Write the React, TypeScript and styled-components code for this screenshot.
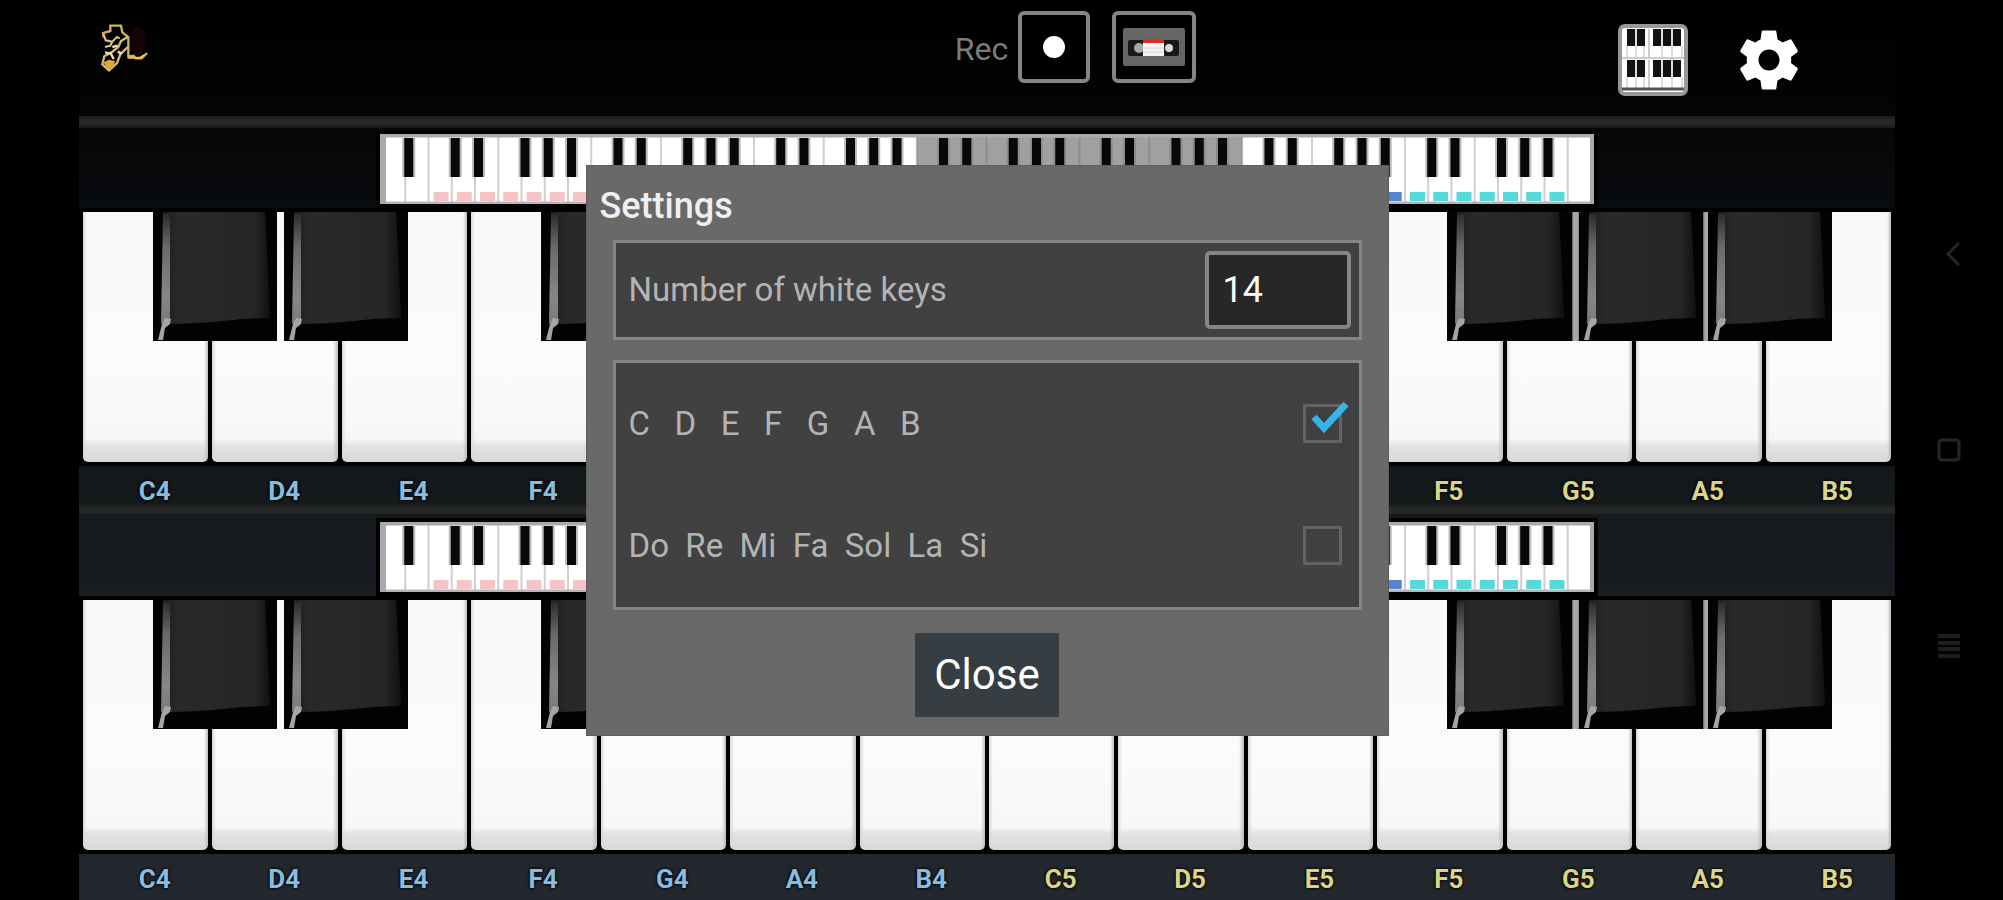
import React, { useState } from "react";
import styled, { createGlobalStyle } from "styled-components";

const GlobalStyle = createGlobalStyle`
  *, *::before, *::after { box-sizing: border-box; }
  body { margin: 0; background: #000; font-family: Roboto, "Liberation Sans", sans-serif; }
  button, input { font: inherit; color: inherit; }
  button { padding: 0; border: 0; background: none; cursor: pointer; }
  svg { display: block; }
`;

const Shell = styled.div`
  display: flex;
  min-height: 100vh;
  padding-left: 79px;
  background: #000;
`;

const Stage = styled.main`
  position: relative;
  flex: 1;
  min-width: 0;
  background: linear-gradient(#000 0, #020303 90px, #07090b 160px, #14191c 490px, #171b20 550px, #23282f 900px);
`;

const SystemBar = styled.nav`
  width: 108px;
  display: flex;
  flex-direction: column;
  align-items: center;
  justify-content: center;
  gap: 172px;
`;

const SystemButton = styled.button`
  width: 24px;
  height: 24px;
`;

const Header = styled.header`
  display: grid;
  grid-template-columns: 7fr auto 5fr;
  align-items: start;
  height: 116px;
  padding: 11px 89px 0 22px;
`;

const LogoWrap = styled.div`
  padding-top: 12px;
`;

const RecGroup = styled.div`
  display: flex;
  align-items: center;
  gap: 22px;
`;

const RecLabel = styled.label`
  display: flex;
  align-items: center;
  gap: 10px;
  font-size: 32px;
  line-height: 38px;
  color: #7c7c7c;
`;

const RecText = styled.span`
  padding-top: 4px;
`;

const FrameButton = styled.button<{ $wide?: boolean }>`
  display: grid;
  place-items: center;
  width: ${(p) => (p.$wide ? 84 : 72)}px;
  height: 72px;
  border: 4px solid #858585;
  border-radius: 6px;
  background: #000;
`;

const Tools = styled.div`
  display: flex;
  justify-content: flex-end;
  align-items: center;
  gap: 44px;
  padding-top: 12px;
`;

const Divider = styled.hr`
  height: 12px;
  margin: 0;
  border: 0;
  background: linear-gradient(#161818, #272828 30%, #272828 70%, #141616);
`;

const Section = styled.section`
  padding-top: 6px;
`;

const MiniStrip = styled.div`
  height: 74px;
  padding: 0 301px;

  svg {
    width: 100%;
    height: 70px;
    outline: 4px solid #020203;
  }
`;

const Keyboard = styled.div`
  display: flex;
  padding: 4px 0 4px 4px;
  background: #000;
`;

const Octave = styled.div`
  position: relative;
  flex: 1;
  display: flex;
`;

const WhiteKey = styled.button`
  flex: 1;
  height: 250px;
  margin-right: 4px;
  border-radius: 0 0 5px 5px;
  background:
    linear-gradient(90deg, #d8d8d8 0, transparent 4px, transparent 121px, #bdbdbd 100%),
    linear-gradient(#f8f8f8 0, #fbfbfb 60%, #f7f7f9 227px, #e2e2e2 234px, #d8d8d8 100%);
`;

const BlackKey = styled.button<{ $left: number; $shade?: boolean }>`
  position: absolute;
  top: 0;
  left: ${(p) => p.$left}%;
  width: 13.7%;
  height: 129px;
  background: #030303;

  &::after {
    content: "";
    display: ${(p) => (p.$shade ? "block" : "none")};
    position: absolute;
    top: 0;
    left: 100%;
    width: 8px;
    height: 100%;
    background: linear-gradient(90deg, #5a5a5a, #adadad 25%, #a3a3a3 75%, #4a4a4a);
  }

  svg { width: 100%; height: 100%; }
`;

const Labels = styled.div`
  display: flex;
  padding: 12px 0 0 4px;
`;

const NoteLabel = styled.span<{ $high: boolean }>`
  flex: 1;
  padding-left: 14px;
  text-align: center;
  font-size: 26px;
  font-weight: 700;
  line-height: 26px;
  color: ${(p) => (p.$high ? "#dcd586" : "#86bde0")};
  text-shadow: 0 0 3px #000, 0 0 3px #000;
`;

const Overlay = styled.div`
  position: absolute;
  inset: 0;
  display: flex;
  align-items: center;
  justify-content: center;
`;

const Dialog = styled.form`
  width: 803px;
  max-width: 100%;
  padding: 18px 26px;
  background: #696969;
  border: 1px solid #5e5e5e;
`;

const Title = styled.h1`
  margin: 0 0 12px -13px;
  font-size: 36px;
  font-weight: 500;
  line-height: 44px;
  color: #efefef;
`;

const Panel = styled.div`
  margin-bottom: 20px;
  padding: 0 15px 0 13px;
  border: 3px solid #868686;
  background: #414141;
`;

const Field = styled.div<{ $tall?: boolean }>`
  display: flex;
  align-items: center;
  justify-content: space-between;
  height: ${(p) => (p.$tall ? 122 : 94)}px;
  font-size: 33px;
  color: #b4b4b4;
`;

const FieldLabel = styled.label`
  white-space: pre;
`;

const NumberInput = styled.input`
  width: 146px;
  height: 78px;
  margin-right: -7px;
  padding: 0 14px;
  border: 4px solid #858585;
  border-radius: 5px;
  background: #272727;
  color: #fff;
  font-size: 36px;
  outline: 0;
`;

const CheckWrap = styled.span`
  position: relative;
  width: 39px;
  height: 39px;
  margin-right: 2px;
`;

const CheckInput = styled.input`
  appearance: none;
  display: block;
  width: 39px;
  height: 39px;
  margin: 0;
  border: 3px solid #636363;
  background: #404040;
`;

const CheckMark = styled.svg`
  position: absolute;
  left: 8px;
  top: -4px;
  pointer-events: none;
`;

const CloseButton = styled.button`
  display: block;
  width: 144px;
  height: 84px;
  margin: 23px auto 0;
  background: #363d43;
  color: #fff;
  font-size: 42px;
`;

const NOTES = ["C", "D", "E", "F", "G", "A", "B"];

const BLACK_KEYS = [
  { note: "C#", left: 7.75 },
  { note: "D#", left: 22.15 },
  { note: "F#", left: 50.6, shade: true },
  { note: "G#", left: 65.1, shade: true },
  { note: "A#", left: 79.4 },
];

const MINI_COUNT = 52;
const MINI_WIDTH = 1214;
const miniX = (i: number) => 2 + i * 23.25;

/* Colour of the octave marker below a key of the overview, C1 being key 2. */
function markerColor(i: number) {
  if (i < 2 || i > 50) return null;
  const colors = ["#f6c3c6", "#f0c890", "#e8e08c", "#9fd89a", "#86bde0", "#5585d2", "#55d9da"];
  return colors[Math.floor((i - 2) / 7)];
}

function MiniKeyboard() {
  const keys = Array.from({ length: MINI_COUNT }, (_, i) => i);
  return (
    <svg viewBox={`0 0 ${MINI_WIDTH} 70`} preserveAspectRatio="none" role="img" aria-label="Keyboard overview">
      <rect width={MINI_WIDTH} height="70" fill="#fff" />
      {keys.map((i) => {
        const color = markerColor(i);
        return (
          <g key={i}>
            {i > 0 && <rect x={miniX(i) - 1} y="0" width="2" height="70" fill="#cfcfcf" />}
            {color && <rect x={miniX(i) + 5} y="58" width="15" height="9" fill={color} />}
          </g>
        );
      })}
      <rect x={miniX(23)} width={14 * 23.25} height="70" fill="#606060" opacity="0.6" />
      {keys.map((i) => {
        const step = (i + 5) % 7;
        if (i === 0 || step === 0 || step === 3) return null;
        return (
          <g key={i}>
            <rect x={miniX(i) - 3} y="4" width="13" height="39" fill="#777" opacity="0.5" />
            <rect x={miniX(i) - 1} y="4" width="9" height="39" fill="#06080c" />
          </g>
        );
      })}
      <path d={`M0 1.5H${MINI_WIDTH}`} stroke="#aaa" strokeWidth="4" />
      <path d={`M0 69H${MINI_WIDTH}`} stroke="#b5b5b5" strokeWidth="3" />
      <path d="M3 0V70" stroke="#aaa" strokeWidth="6" />
      <path d={`M${MINI_WIDTH - 2} 0V70`} stroke="#aaa" strokeWidth="4" />
    </svg>
  );
}

function BlackKeyFace() {
  return (
    <svg viewBox="0 0 124 129" preserveAspectRatio="none" aria-hidden="true">
      <defs>
        <linearGradient id="keyBody" x1="0" x2="1">
          <stop offset="0" stopColor="#1e1e1e" />
          <stop offset="0.15" stopColor="#292929" />
          <stop offset="0.85" stopColor="#262626" />
          <stop offset="1" stopColor="#101010" />
        </linearGradient>
        <linearGradient id="keyEdge" x1="0" x2="0" y1="0" y2="1">
          <stop offset="0" stopColor="#2c2c2c" />
          <stop offset="0.3" stopColor="#6a6a6a" />
          <stop offset="0.75" stopColor="#868686" />
          <stop offset="1" stopColor="#7a7a7a" />
        </linearGradient>
      </defs>
      <path d="M10 0H112L117 106Q92 106 70 109Q40 112 14 112Z" fill="url(#keyBody)" />
      <path d="M10 2H17L17 108L8 112Z" fill="url(#keyEdge)" />
      <path d="M12 106L18 107L17 112L12 116L10 128L5 128L9 112Z" fill="#a5a5a5" />
    </svg>
  );
}

function PianoSection() {
  return (
    <Section>
      <MiniStrip>
        <MiniKeyboard />
      </MiniStrip>
      <Keyboard>
        {[4, 5].map((octave) => (
          <Octave key={octave}>
            {NOTES.map((n) => (
              <WhiteKey key={n} type="button" aria-label={`${n}${octave}`} />
            ))}
            {BLACK_KEYS.map((k) => (
              <BlackKey key={k.note} type="button" aria-label={`${k.note}${octave}`} $left={k.left} $shade={k.shade}>
                <BlackKeyFace />
              </BlackKey>
            ))}
          </Octave>
        ))}
      </Keyboard>
      <Labels>
        {[4, 5].flatMap((octave) =>
          NOTES.map((n) => (
            <NoteLabel key={n + octave} $high={octave === 5}>
              {n}
              {octave}
            </NoteLabel>
          ))
        )}
      </Labels>
    </Section>
  );
}

function Logo() {
  return (
    <svg width="50" height="50" viewBox="0 0 150 150" fill="none" aria-label="Logo" role="img">
      <ellipse cx="112" cy="52" rx="22" ry="44" fill="#200406" opacity="0.7" />
      <path
        d="M8 44L6 30L28 24V8H60L64 28L82 42V100L98 98L104 106H122L138 90"
        stroke="#d2ae62"
        strokeWidth="7"
      />
      <path d="M8 34L14 52L34 56L28 68L12 72M34 56L48 42L56 46" stroke="#dcc58c" strokeWidth="6" />
      <path d="M80 42L60 54L52 72L34 86L10 100L4 124L24 142L48 120L58 94L80 72" stroke="#d9ba78" strokeWidth="7" />
      <path d="M34 72L50 68M12 88L30 92L38 108M50 86L62 92" stroke="#f0e2b8" strokeWidth="7" />
      <path d="M8 118L24 110L42 114L36 138H18Z" fill="#dba83e" />
      <path d="M80 104H118L130 96" stroke="#e8c45e" strokeWidth="6" />
    </svg>
  );
}

function Cassette() {
  return (
    <svg width="62" height="38" viewBox="0 0 62 38" aria-hidden="true">
      <rect width="62" height="38" rx="2" fill="#666" />
      <rect x="5" y="12" width="51" height="16" rx="2" fill="#191919" />
      <circle cx="16" cy="20" r="5" fill="#a8a8a8" />
      <circle cx="46" cy="20" r="4" fill="#d8d8d8" />
      <rect x="20" y="11" width="21" height="17" fill="#f4f4f4" />
      <rect x="20" y="11" width="21" height="4" fill="#e02a22" />
      <path d="M21 20H40M21 24H40" stroke="#d4d4d4" />
    </svg>
  );
}

function DualKeyboardIcon() {
  const row = (y: number) => (
    <g transform={`translate(0 ${y})`}>
      {[9, 19].map((x) => (
        <rect key={x} x={x} y="0" width="8" height="17" fill="#111" />
      ))}
      {[35, 45, 55].map((x) => (
        <rect key={x} x={x} y="0" width="8" height="17" fill="#111" />
      ))}
      <path d="M18 0V28M44 0V28M54 0V28M9 17V28M64 17V28M26 17V28" stroke="#bbb" />
      <path d="M31 0V28" stroke="#999" />
    </g>
  );
  return (
    <svg width="70" height="72" viewBox="0 0 70 72" aria-hidden="true">
      <rect x="2" y="2" width="66" height="68" rx="5" fill="#fff" stroke="#989898" strokeWidth="4" />
      {row(5)}
      <path d="M4 34H66" stroke="#999" />
      {row(36)}
      <path d="M4 65H66" stroke="#555" strokeWidth="3" />
    </svg>
  );
}

function GearIcon() {
  return (
    <svg width="74" height="74" viewBox="0 0 24 24" fill="#fff" aria-hidden="true">
      <path d="M19.140 12.940c.04-.3.06-.61.06-.94 0-.32-.02-.64-.07-.94l2.030-1.580c.18-.14.23-.41.12-.61l-1.920-3.320c-.12-.22-.37-.29-.59-.22l-2.390.96c-.5-.38-1.030-.7-1.620-.94l-.36-2.540c-.04-.24-.24-.41-.48-.41h-3.840c-.24 0-.43.17-.47.41l-.36 2.540c-.59.24-1.130.57-1.620.94l-2.390-.96c-.22-.08-.47 0-.59.22L2.740 8.870c-.12.21-.08.47.12.61l2.030 1.580c-.05.3-.09.63-.09.94s.02.64.07.94l-2.030 1.580c-.18.14-.23.41-.12.61l1.920 3.320c.12.22.37.29.59.22l2.390-.96c.5.38 1.030.7 1.620.94l.36 2.540c.05.24.24.41.48.41h3.840c.24 0 .44-.17.47-.41l.36-2.540c.59-.24 1.130-.56 1.620-.94l2.390.96c.22.08.47 0 .59-.22l1.920-3.320c.12-.22.07-.47-.12-.61l-2.010-1.580zM12 15.400c-1.880 0-3.400-1.520-3.400-3.400s1.520-3.400 3.400-3.400 3.400 1.520 3.400 3.400-1.520 3.400-3.400 3.400z" />
    </svg>
  );
}

function NameOption(props: { id: string; text: string; checked: boolean; onChange: () => void }) {
  return (
    <Field $tall>
      <FieldLabel htmlFor={props.id}>{props.text}</FieldLabel>
      <CheckWrap>
        <CheckInput id={props.id} type="checkbox" checked={props.checked} onChange={props.onChange} />
        {props.checked && (
          <CheckMark width="40" height="34" viewBox="0 0 40 34" aria-hidden="true">
            <path d="M3 17L13 28L35 4" fill="none" stroke="#36b4ea" strokeWidth="7" />
          </CheckMark>
        )}
      </CheckWrap>
    </Field>
  );
}

function SettingsDialog(props: { onClose: () => void }) {
  const [count, setCount] = useState("14");
  const [letters, setLetters] = useState(true);
  const [solfege, setSolfege] = useState(false);
  return (
    <Overlay>
      <Dialog role="dialog" aria-labelledby="settings-title" onSubmit={(e) => e.preventDefault()}>
        <Title id="settings-title">Settings</Title>
        <Panel>
          <Field>
            <FieldLabel htmlFor="white-keys">Number of white keys</FieldLabel>
            <NumberInput id="white-keys" inputMode="numeric" value={count} onChange={(e) => setCount(e.target.value)} />
          </Field>
        </Panel>
        <Panel>
          <NameOption id="letters" text="C   D   E   F   G   A   B" checked={letters} onChange={() => setLetters(!letters)} />
          <NameOption id="solfege" text="Do  Re  Mi  Fa  Sol  La  Si" checked={solfege} onChange={() => setSolfege(!solfege)} />
        </Panel>
        <CloseButton type="button" onClick={props.onClose}>
          Close
        </CloseButton>
      </Dialog>
    </Overlay>
  );
}

export default function App() {
  const [open, setOpen] = useState(true);
  return (
    <>
      <GlobalStyle />
      <Shell>
        <Stage>
          <Header>
            <LogoWrap>
              <Logo />
            </LogoWrap>
            <RecGroup>
              <RecLabel>
                <RecText>Rec</RecText>
                <FrameButton type="button" aria-label="Record">
                  <svg width="22" height="22" viewBox="0 0 22 22" aria-hidden="true">
                    <circle cx="11" cy="11" r="11" fill="#fff" />
                  </svg>
                </FrameButton>
              </RecLabel>
              <FrameButton type="button" $wide aria-label="Recordings">
                <Cassette />
              </FrameButton>
            </RecGroup>
            <Tools>
              <button type="button" aria-label="Two keyboards">
                <DualKeyboardIcon />
              </button>
              <button type="button" aria-label="Settings" onClick={() => setOpen(true)}>
                <GearIcon />
              </button>
            </Tools>
          </Header>
          <Divider />
          <PianoSection />
          <Divider />
          <PianoSection />
          {open && <SettingsDialog onClose={() => setOpen(false)} />}
        </Stage>
        <SystemBar aria-label="System">
          <SystemButton type="button" aria-label="Back">
            <svg width="24" height="24" viewBox="0 0 24 24" fill="none" stroke="#262626" strokeWidth="3">
              <path d="M22 1L11 12L22 23" />
            </svg>
          </SystemButton>
          <SystemButton type="button" aria-label="Home">
            <svg width="24" height="24" viewBox="0 0 24 24" fill="none" stroke="#262626" strokeWidth="3">
              <rect x="2" y="2" width="20" height="20" rx="3" />
            </svg>
          </SystemButton>
          <SystemButton type="button" aria-label="Recent apps">
            <svg width="24" height="24" viewBox="0 0 24 24" fill="none" stroke="#1d1d1d" strokeWidth="4">
              <path d="M1 2H23M1 9H23M1 15H23M1 22H23" />
            </svg>
          </SystemButton>
        </SystemBar>
      </Shell>
    </>
  );
}
